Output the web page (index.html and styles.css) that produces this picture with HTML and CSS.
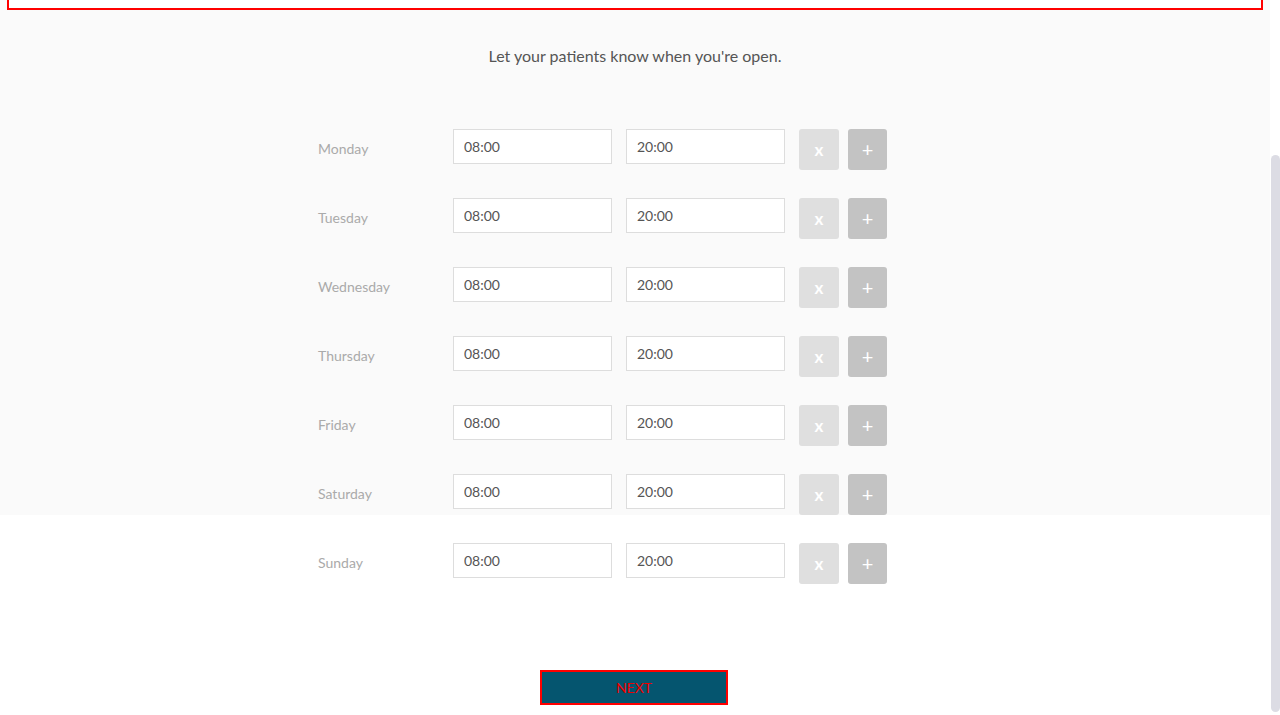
FILE: index.html
```html
<!DOCTYPE html>
<html lang="en">
<head>
<meta charset="utf-8">
<title>Opening hours</title>
<link rel="stylesheet" href="styles.css">
</head>
<body>
<div class="viewport">
  <main class="page">
    <div class="top-box"></div>
    <p class="subtitle">Let your patients know when you're open.</p>
    <div class="schedule">
      <div class="row"><span class="day">Monday</span><input class="time" value="08:00"><input class="time" value="20:00"><button class="btn btn-remove">x</button><button class="btn btn-add">+</button></div>
      <div class="row"><span class="day">Tuesday</span><input class="time" value="08:00"><input class="time" value="20:00"><button class="btn btn-remove">x</button><button class="btn btn-add">+</button></div>
      <div class="row"><span class="day">Wednesday</span><input class="time" value="08:00"><input class="time" value="20:00"><button class="btn btn-remove">x</button><button class="btn btn-add">+</button></div>
      <div class="row"><span class="day">Thursday</span><input class="time" value="08:00"><input class="time" value="20:00"><button class="btn btn-remove">x</button><button class="btn btn-add">+</button></div>
      <div class="row"><span class="day">Friday</span><input class="time" value="08:00"><input class="time" value="20:00"><button class="btn btn-remove">x</button><button class="btn btn-add">+</button></div>
      <div class="row"><span class="day">Saturday</span><input class="time" value="08:00"><input class="time" value="20:00"><button class="btn btn-remove">x</button><button class="btn btn-add">+</button></div>
      <div class="row"><span class="day">Sunday</span><input class="time" value="08:00"><input class="time" value="20:00"><button class="btn btn-remove">x</button><button class="btn btn-add">+</button></div>
    </div>
    <div class="actions"><button class="next">NEXT</button></div>
  </main>
  <div class="scrollbar"><div class="thumb"></div></div>
</div>
</body>
</html>
```
FILE: styles.css
```css
html, body {
  margin: 0;
  padding: 0;
  height: 100%;
  overflow: hidden;
  background: #fff;
}
body {
  font-family: Lato, "Liberation Sans", sans-serif;
}
.viewport {
  display: flex;
  height: 715px;
}
.page {
  flex: 1;
  background: linear-gradient(#fafafa 0, #fafafa 515px, #fff 515px);
}
.top-box {
  height: 8px;
  margin: 0 7px;
  border: 2px solid #f00;
  border-top: none;
  background: #fff;
}
.subtitle {
  margin: 36px 0 0;
  text-align: center;
  font-size: 16px;
  line-height: 20px;
  color: #555;
}
.schedule {
  width: 634px;
  margin: 63px auto 0;
  display: flex;
  flex-direction: column;
  gap: 28px;
}
.row {
  display: flex;
  align-items: flex-start;
  height: 41px;
}
.day {
  width: 135px;
  line-height: 39px;
  font-size: 14px;
  color: #aaa;
}
.time {
  box-sizing: border-box;
  width: 159px;
  height: 35px;
  margin: 0 14px 0 0;
  padding: 0 10px;
  border: 1px solid #ddd;
  border-radius: 0;
  background: #fff;
  font-family: Lato, "Liberation Sans", sans-serif;
  font-size: 14px;
  color: #555;
  outline: none;
}
.btn {
  box-sizing: border-box;
  width: 40px;
  height: 41px;
  margin: 0;
  padding: 0;
  border: none;
  border-radius: 3px;
  color: #fff;
  font-family: Lato, "Liberation Sans", sans-serif;
  line-height: 41px;
}
.btn-remove {
  background: #dfdfdf;
  margin-right: 9px;
  font-weight: bold;
  font-size: 17px;
}
.btn-add {
  background: #c3c3c3;
  width: 39px;
  font-size: 20px;
}
.actions {
  display: flex;
  justify-content: center;
  margin-top: 86px;
  padding-right: 2px;
}
.next {
  box-sizing: border-box;
  width: 188px;
  height: 35px;
  margin: 0;
  border: 2px solid #f00;
  background: #05556f;
  color: #e00;
  font-family: Lato, "Liberation Sans", sans-serif;
  font-size: 14px;
  padding: 0;
}
.scrollbar {
  width: 10px;
  background: #fff;
}
.thumb {
  margin-top: 155px;
  height: 557px;
  width: 9px;
  margin-left: 1px;
  border-radius: 5px;
  background: #dcdce4;
}
```
